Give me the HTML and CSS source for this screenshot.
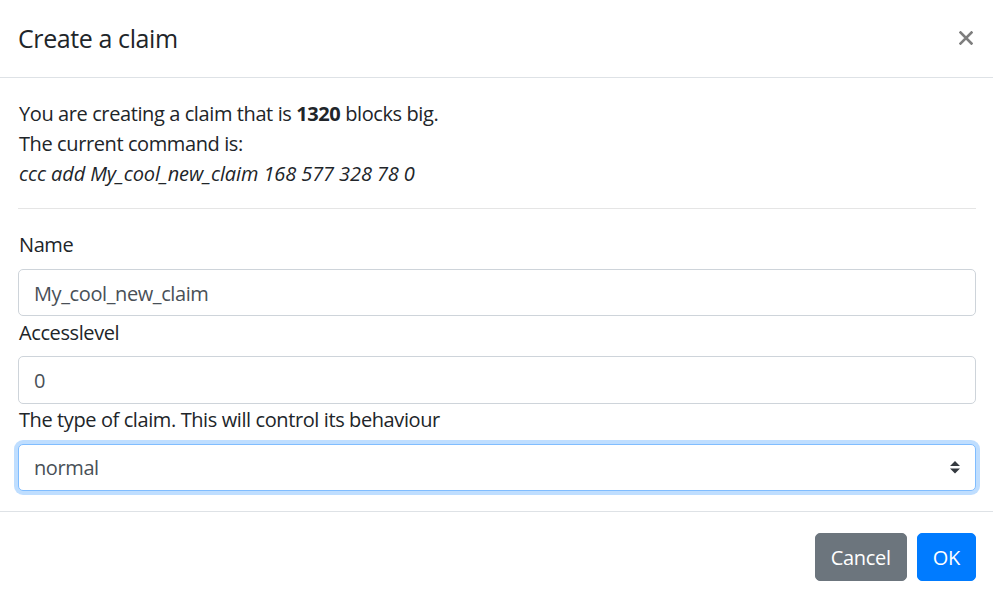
FILE: index.html
```html
<!DOCTYPE html>
<html lang="en">
<head>
<meta charset="utf-8">
<title>Create a claim</title>
<link rel="stylesheet" href="styles.css">
</head>
<body>
<div class="modal">
  <div class="modal-header">
    <h5 class="modal-title">Create a claim</h5>
    <button type="button" class="close" aria-label="Close">
      <svg width="14" height="14" viewBox="0 0 14 14" aria-hidden="true"><path d="M1.5 1.5L12.5 12.5M12.5 1.5L1.5 12.5" stroke="#000" stroke-width="2.6" stroke-linecap="square"/></svg>
    </button>
  </div>
  <div class="modal-body">
    <p class="intro">You are creating a claim that is <b>1320</b> blocks big.<br>
    The current command is:<br>
    <i>ccc add My_cool_new_claim 168 577 328 78 0</i></p>
    <hr class="divider">
    <label class="label" for="name">Name</label>
    <input class="control" id="name" type="text" value="My_cool_new_claim">
    <label class="label" for="access">Accesslevel</label>
    <input class="control" id="access" type="text" value="0">
    <label class="label" for="type">The type of claim. This will control its behaviour</label>
    <div class="select-wrap">
      <select class="control select focus" id="type">
        <option>normal</option>
      </select>
      <svg class="select-arrow" width="10" height="12.5" viewBox="0 0 4 5" aria-hidden="true"><path d="M2 0L0 2h4zm0 5L0 3h4z" fill="#343a40"/></svg>
    </div>
  </div>
  <div class="modal-footer">
    <button type="button" class="btn btn-secondary">Cancel</button>
    <button type="button" class="btn btn-primary">OK</button>
  </div>
</div>
</body>
</html>
```
FILE: styles.css
```css
html, body {
  margin: 0;
  padding: 0;
  background: #fff;
}
body {
  font-family: "Open Sans", "Noto Sans", sans-serif;
  font-size: 20px;
  line-height: 30px;
  color: #212529;
  letter-spacing: -0.4px;
}
.modal {
  display: flex;
  flex-direction: column;
  width: 993px;
}
.modal-header {
  display: flex;
  align-items: center;
  justify-content: space-between;
  padding: 20px 17px 20px 18px;
  border-bottom: 1px solid #dee2e6;
}
.modal-title {
  margin: 0;
  padding-top: 1px;
  font-size: 25px;
  line-height: 35.5px;
  font-weight: 500;
  letter-spacing: -0.4px;
}
.close {
  display: flex;
  align-items: center;
  justify-content: center;
  background: none;
  border: 0;
  padding: 0 3px 1px 0;
  margin: 0;
  opacity: .5;
  cursor: pointer;
}
.modal-body {
  display: flex;
  flex-direction: column;
  padding: 20px 17px 20px 18px;
}
.intro {
  margin: 0;
  padding-left: 1px;
  padding-top: 1px;
  margin-bottom: -1px;
}
.intro b { font-weight: 700; }
.intro i { letter-spacing: -0.1px; }
.divider {
  margin: 20px 0;
  border: 0;
  border-top: 1px solid rgba(0,0,0,.1);
  height: 0;
  width: 100%;
}
.label {
  padding-left: 1px;
  padding-top: 1.5px;
  margin-bottom: 8.5px;
}
.control {
  box-sizing: border-box;
  display: block;
  width: 100%;
  height: 47.5px;
  padding: 8px 15px 6px;
  font-family: inherit;
  font-size: 20px;
  line-height: 30px;
  letter-spacing: -0.4px;
  color: #495057;
  background: #fff;
  border: 1px solid #ced4da;
  border-radius: 5px;
  outline: none;
}
.select-wrap {
  position: relative;
}
.select {
  -webkit-appearance: none;
  appearance: none;
  padding-right: 40px;
}
.focus {
  border-color: #80bdff;
  box-shadow: 0 0 0 4px rgba(0,123,255,.25);
}
.select-arrow {
  position: absolute;
  right: 16px;
  top: 17.5px;
}
.modal-footer {
  display: flex;
  justify-content: flex-end;
  align-items: center;
  gap: 10px;
  padding: 21px 17px 19px 18px;
  border-top: 1px solid #dee2e6;
}
.btn {
  box-sizing: border-box;
  height: 47.5px;
  padding: 8px 15px 6px;
  font-family: inherit;
  font-size: 20px;
  line-height: 30px;
  letter-spacing: -0.3px;
  color: #fff;
  border: 1px solid transparent;
  border-radius: 5px;
  cursor: pointer;
}
.btn-secondary {
  background: #6c757d;
  border-color: #6c757d;
}
.btn-primary {
  background: #007bff;
  border-color: #007bff;
}
```
